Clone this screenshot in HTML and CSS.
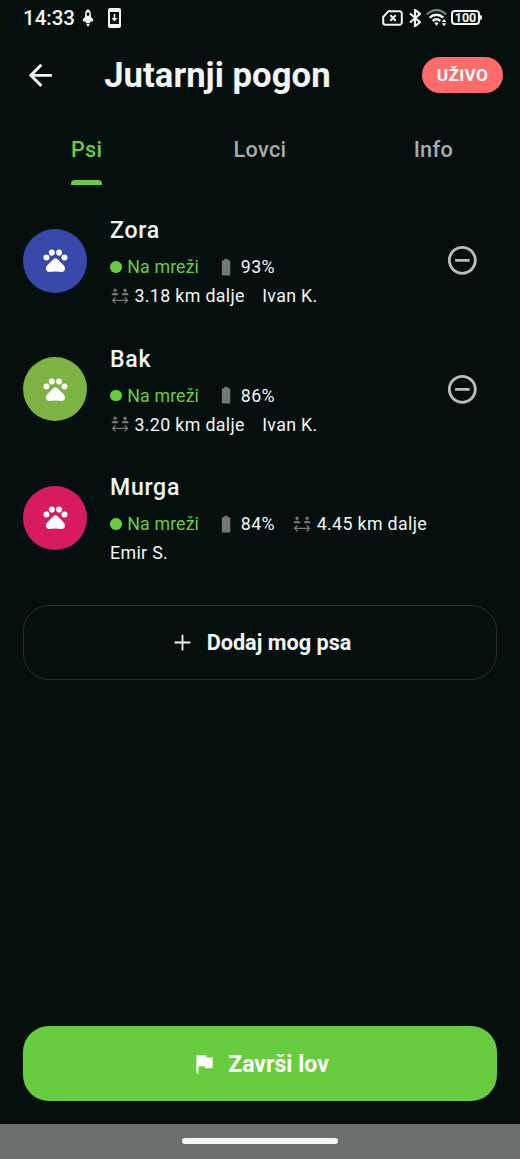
FILE: index.html
```html
<!DOCTYPE html>
<html lang="hr">
<head>
<meta charset="utf-8">
<title>Jutarnji pogon</title>
<link rel="stylesheet" href="styles.css">
</head>
<body>
<svg class="defs" aria-hidden="true">
  <symbol id="pets" viewBox="0 0 24 24"><circle cx="4.5" cy="9.5" r="2.5"/><circle cx="9" cy="5.5" r="2.5"/><circle cx="15" cy="5.500" r="2.500"/><circle cx="19.5" cy="9.5" r="2.5"/><path d="M10.400 10.900Q12 9.500 13.600 10.900L19 16.200Q20.300 17.700 19.900 19.600Q19.400 21.500 17.500 21.500Q12 20.900 6.500 21.500Q4.600 21.500 4.100 19.600Q3.700 17.700 5 16.200z"/></symbol>
  <symbol id="battery" viewBox="0 0 24 24"><path d="M15.67 4H14V2h-4v2H8.33C7.6 4 7 4.6 7 5.33v15.33C7 21.4 7.6 22 8.33 22h7.33c.74 0 1.34-.6 1.34-1.33V5.33C17 4.6 16.4 4 15.67 4z"/></symbol>
  <symbol id="distance" viewBox="0 0 24 24"><path d="M4 5c0-1.11.89-2 2-2s2 .89 2 2-.89 2-2 2-2-.89-2-2zM8.78 8.58C7.93 8.21 6.99 8 6 8s-1.93.21-2.78.58C2.48 8.9 2 9.62 2 10.43V11h8v-.57c0-.81-.48-1.53-1.22-1.85zM18 7c1.11 0 2-.89 2-2s-.89-2-2-2-2 .89-2 2 .89 2 2 2zM20.78 8.58C19.93 8.21 18.99 8 18 8s-1.93.21-2.78.58c-.74.32-1.22 1.04-1.22 1.85V11h8v-.57c0-.81-.48-1.53-1.22-1.85zM22 17l-4-4-1.100 1.100L19 16.200H5l2.100-2.100L6 13l-4 4 4 4 1.100-1.100L5 17.800h14l-2.100 2.100L18 21z"/></symbol>
  <symbol id="remove" viewBox="0 0 24 24"><path d="M7 11v2h10v-2H7zm5-9C6.48 2 2 6.48 2 12s4.48 10 10 10 10-4.48 10-10S17.52 2 12 2zm0 18c-4.41 0-8-3.59-8-8s3.59-8 8-8 8 3.59 8 8-3.59 8-8 8z"/></symbol>
</svg>
<div class="screen">
  <div class="status">
    <span class="clock">14:33</span>
    <svg class="rocket" viewBox="0 0 12 18"><path fill-rule="evenodd" d="M6 0C8.300 1.500 9 3.500 9 5.500V8l2 2v2.500H8.500L8 14H4l-.5-1.500H1V10l2-2V5.500C3 3.500 3.700 1.500 6 0zM6 3.200a1.500 1.900 0 1 0 0 3.800 1.500 1.900 0 1 0 0-3.800z"/><path d="M4 14.800h4L6 18z"/></svg>
    <svg class="update" viewBox="0 0 13 20"><path fill-rule="evenodd" d="M2 0h9a2 2 0 0 1 2 2v16a2 2 0 0 1-2 2H2a2 2 0 0 1-2-2V2a2 2 0 0 1 2-2zM2 4v12h9V4z"/><path d="M5.700 6h1.600v4h2.200l-3 3.500-3-3.500h2.200z"/></svg>
    <div class="system">
      <svg class="sim" viewBox="0 0 21 16"><path d="M6.500 1.200H17.500a2.300 2.300 0 0 1 2.300 2.300v9a2.300 2.300 0 0 1-2.300 2.300h-14a2.300 2.300 0 0 1-2.300-2.300V7z" fill="none" stroke="currentColor" stroke-width="2"/><path d="M8.300 5.200l5.400 5.600m0-5.600l-5.400 5.600" stroke="currentColor" stroke-width="2"/></svg>
      <svg class="bluetooth" viewBox="0 0 12 18"><path d="M1 4.500l10 8.700-5 4V.9l5 4L1 13.500" fill="none" stroke="currentColor" stroke-width="2.100"/></svg>
      <svg class="wifi" viewBox="0 0 21 18"><g fill="none" stroke="currentColor"><path d="M.8 5.500C6.500-.3 14.500-.3 20.200 5.500" stroke-width="2.200" opacity=".5"/><path d="M3.700 8.600c4-3.900 9.600-3.900 13.600 0M6.700 12c2.400-2.200 5.200-2.200 7.600 0" stroke-width="2.400"/></g><path d="M8.300 13.900q2.200-1.500 4.400 0L10.500 16.700zM15.800 13h4.600l-2.300-2.900zM15.800 14.300h4.600l-2.300 2.900z"/></svg>
      <span class="power"><span class="cell">100</span><span class="tip"></span></span>
    </div>
  </div>

  <header class="appbar">
    <svg class="back" viewBox="0 0 24 24"><path d="M20 11H7.830l5.590-5.590L12 4l-8 8 8 8 1.410-1.410L7.830 13H20z"/></svg>
    <h1 class="title">Jutarnji pogon</h1>
    <span class="live">UŽIVO</span>
  </header>

  <nav class="tabs">
    <div class="tab active"><span>Psi</span></div>
    <div class="tab"><span>Lovci</span></div>
    <div class="tab"><span>Info</span></div>
  </nav>

  <main class="list">
    <article class="dog">
      <div class="avatar blue"><svg><use href="#pets"/></svg></div>
      <div class="details">
        <h2 class="name">Zora</h2>
        <div class="meta">
          <span class="item online"><i class="dot"></i>Na mreži</span>
          <span class="item"><svg><use href="#battery"/></svg>93%</span>
          <span class="item"><svg><use href="#distance"/></svg>3.18 km dalje</span>
          <span class="item">Ivan K.</span>
        </div>
      </div>
      <svg class="remove"><use href="#remove"/></svg>
    </article>
    <article class="dog">
      <div class="avatar green"><svg><use href="#pets"/></svg></div>
      <div class="details">
        <h2 class="name">Bak</h2>
        <div class="meta">
          <span class="item online"><i class="dot"></i>Na mreži</span>
          <span class="item"><svg><use href="#battery"/></svg>86%</span>
          <span class="item"><svg><use href="#distance"/></svg>3.20 km dalje</span>
          <span class="item">Ivan K.</span>
        </div>
      </div>
      <svg class="remove"><use href="#remove"/></svg>
    </article>
    <article class="dog">
      <div class="avatar pink"><svg><use href="#pets"/></svg></div>
      <div class="details">
        <h2 class="name">Murga</h2>
        <div class="meta">
          <span class="item online"><i class="dot"></i>Na mreži</span>
          <span class="item"><svg><use href="#battery"/></svg>84%</span>
          <span class="item"><svg><use href="#distance"/></svg>4.45 km dalje</span>
          <span class="item">Emir S.</span>
        </div>
      </div>
    </article>
  </main>

  <button class="button outline"><svg viewBox="0 0 24 24"><path d="M19 12.800h-6.200V19h-1.600v-6.200H5v-1.600h6.200V5h1.600v6.200H19z"/></svg><span>Dodaj mog psa</span></button>
  <button class="button primary"><svg viewBox="0 0 24 24"><path d="M14.400 6L14 4H5v17h2v-7h5.600l.4 2h7V6z"/></svg><span>Završi lov</span></button>

  <footer class="navbar"><span class="handle"></span></footer>
</div>
</body>
</html>
```
FILE: styles.css
```css
* { box-sizing: border-box; }

body {
  margin: 0;
  background: #05100e;
  color: #f1f5f3;
  font-family: Roboto, "Noto Sans", sans-serif;
}

svg { fill: currentColor; flex: none; display: block; }
.defs { display: none; }

.screen {
  display: flex;
  flex-direction: column;
  width: 520px;
  height: 1159px;
  overflow: hidden;
}

.status {
  display: flex;
  align-items: center;
  height: 35px;
  padding: 0 38px 0 23px;
}
.clock { width: 59px; font-size: 20.5px; font-weight: 500; line-height: 24px; }
.rocket { width: 12px; height: 18px; }
.update { width: 13px; height: 20px; margin-left: 14px; }
.system { display: flex; align-items: center; margin-left: auto; }
.sim { width: 21px; height: 16px; }
.bluetooth { width: 12px; height: 18px; margin-left: 6px; }
.wifi { width: 21px; height: 18px; margin-left: 5px; }
.power { display: flex; align-items: center; margin-left: 4px; }
.cell {
  width: 29px;
  height: 15px;
  border: 2px solid currentColor;
  border-radius: 4px;
  font-size: 12.5px;
  font-weight: 700;
  line-height: 12px;
  text-align: center;
}
.tip { width: 2px; height: 5px; background: currentColor; border-radius: 0 2px 2px 0; }

.appbar {
  display: flex;
  align-items: center;
  height: 80px;
  padding: 0 17px 0 23px;
}
.back { width: 34.67px; height: 34.67px; }
.title { flex: 1; margin: 0 0 0 46.5px; font-size: 34.67px; font-weight: 700; letter-spacing: .05px; line-height: 44px; }
.live {
  width: 81px;
  height: 36px;
  border-radius: 18px;
  background: #ff6b6b;
  color: #fff;
  font-size: 17.3px;
  font-weight: 700;
  letter-spacing: .3px;
  line-height: 37px;
  text-align: center;
}

.tabs { display: grid; grid-template-columns: repeat(3, 1fr); height: 70px; }
.tab {
  display: flex;
  justify-content: center;
  color: #a5adaa;
  font-size: 21.67px;
  font-weight: 500;
  letter-spacing: .3px;
  line-height: 65px;
  padding-top: 2px;
}
.tab span { display: flex; flex-direction: column; }
.active { color: #67cc3e; }
.active span::after {
  content: "";
  height: 4.5px;
  margin-top: -2px;
  border-radius: 4px 4px 0 0;
  background: #67cc3e;
}

.list { display: flex; flex-direction: column; padding-top: 11.5px; }
.dog {
  display: flex;
  align-items: center;
  height: 128.5px;
  padding: 0 40.5px 0 23px;
}
.avatar {
  display: flex;
  align-items: center;
  justify-content: center;
  width: 64px;
  height: 64px;
  border-radius: 50%;
  color: #fff;
}
.avatar svg { width: 28.9px; height: 28.9px; }
.blue { background: #3949ab; }
.green { background: #7cb342; }
.pink { background: #d81b60; }
.details { flex: 1; margin-left: 23px; padding-top: 5px; }
.name {
  margin: 0 0 6px;
  font-size: 23.1px;
  font-weight: 500;
  letter-spacing: .7px;
  line-height: 30px;
}
.meta { display: flex; flex-wrap: wrap; column-gap: 17.3px; }
.item {
  display: flex;
  align-items: center;
  gap: 4.3px;
  font-size: 17.8px;
  letter-spacing: .35px;
  line-height: 29px;
}
.item svg { width: 20.2px; height: 20.2px; color: #747977; }
.online { color: #67cc3e; gap: 5.8px; letter-spacing: .12px; }
.dot { width: 11.5px; height: 11.5px; border-radius: 50%; background: currentColor; }
.remove { width: 34.67px; height: 34.67px; margin-left: 23px; color: #b7bebb; }

.button {
  display: flex;
  align-items: center;
  justify-content: center;
  height: 75px;
  margin: 0 23px;
  padding: 0;
  border: 0;
  border-radius: 26px;
  color: #f1f5f3;
  font: 700 21.67px/30px Roboto, sans-serif;
}
.outline { margin-top: 23px; border: 1.5px solid #26302e; background: none; }
.outline svg { width: 27px; height: 27px; margin-right: 11px; }
.primary { margin-top: auto; margin-bottom: 23px; background: #67cc3e; color: #fff; font-size: 23.1px; }
.primary svg { width: 26px; height: 26px; margin-right: 11px; }
.primary span { padding-top: 2px; }

.navbar {
  display: flex;
  justify-content: center;
  height: 35px;
  padding-top: 14px;
  background: #6b706f;
}
.handle { width: 156px; height: 6px; border-radius: 4px; background: #f5f7f6; }
```
